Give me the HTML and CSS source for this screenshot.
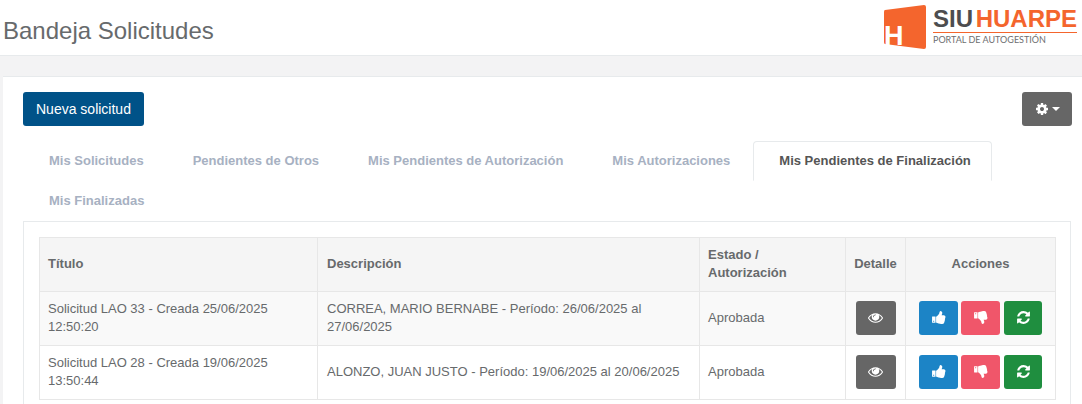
FILE: index.html
```html
<!DOCTYPE html>
<html lang="es">
<head>
    <meta charset="UTF-8">
    <title>Bandeja Solicitudes</title>
    <link rel="stylesheet" href="styles.css">
</head>
<body>
    <svg class="icon-defs" xmlns="http://www.w3.org/2000/svg">
        <defs>
            <path id="i-cog" d="M1152 896q0-106-75-181t-181-75-181 75-75 181 75 181 181 75 181-75 75-181zm512-109v222q0 12-8 23t-20 13l-185 28q-19 54-39 91 35 50 107 138 10 12 10 25t-9 23q-27 37-99 108t-94 71q-12 0-26-9l-138-108q-44 23-91 38-16 136-29 186-7 28-36 28h-222q-14 0-24.500-8.500t-11.500-21.500l-28-184q-49-16-90-37l-141 107q-10 9-25 9-14 0-25-11-126-114-165-168-7-10-7-23 0-12 8-23 15-21 51-66.500t54-70.500q-27-50-41-99l-183-27q-13-2-21-12.500t-8-23.500v-222q0-12 8-23t19-13l186-28q14-46 39-92-40-57-107-138-10-12-10-24 0-10 9-23 26-36 98.500-107.500t94.500-71.500q13 0 26 10l138 107q44-23 91-38 16-136 29-186 7-28 36-28h222q14 0 24.500 8.500t11.500 21.500l28 184q49 16 90 37l142-107q9-9 24-9 13 0 25 10 129 119 165 170 7 8 7 22 0 12-8 23-15 21-51 66.500t-54 70.500q26 50 41 98l183 28q13 2 21 12.500t8 23.500z"/>
            <path id="i-eye" d="M1664 960q-152-236-381-353 61 104 61 225 0 185-131.500 316.500t-316.500 131.500-316.500-131.500-131.500-316.500q0-121 61-225-229 117-381 353 133 205 333.500 326.500t434.500 121.500 434.500-121.500 333.500-326.500zm-720-384q0-20-14-34t-34-14q-125 0-214.500 89.500t-89.500 214.500q0 20 14 34t34 14 34-14 14-34q0-86 61-147t147-61q20 0 34-14t14-34zm848 384q0 34-20 69-140 230-376.500 368.500t-499.500 138.500-499.500-139-376.500-368q-20-35-20-69t20-69q140-229 376.500-368t499.500-139 499.500 139 376.500 368q20 35 20 69z"/>
            <path id="i-up" d="M384 1344q0-26-19-45t-45-19-45 19-19 45 19 45 45 19 45-19 19-45zm160-512v640q0 26-19 45t-45 19h-288q-26 0-45-19t-19-45v-640q0-26 19-45t45-19h288q26 0 45 19t19 45zm1184 0q0 86-55 149 15 44 15 76 3 76-43 137 17 56 0 117-15 57-54 94 9 112-49 181-64 76-197 78h-129q-66 0-144-15.500t-121.500-29-120.500-39.500q-123-43-158-44-26-1-45-19.500t-19-44.500v-641q0-25 18-43.500t43-20.500q24-2 76-59t101-121q68-87 101-120 18-18 31-48t17.500-48.500 13.500-60.500q7-39 12.500-61t19.500-52 34-50q19-19 45-19 46 0 82.500 10.500t60 26 40 40.500 24 45 12 50 5 45 .5 39q0 38-9.500 76t-19 60-27.500 56q-3 6-10 18t-11 22-8 24h277q78 0 135 57t57 135z"/>
            <path id="i-refresh" d="M1639 1056q0 5-1 7-64 268-268 434.500t-478 166.500q-146 0-282.500-55t-243.500-157l-129 129q-19 19-45 19t-45-19-19-45v-448q0-26 19-45t45-19h448q26 0 45 19t19 45-19 45l-137 137q71 66 161 102t187 36q134 0 250-65t186-179q11-17 53-117 8-23 30-23h192q13 0 22.500 9.500t9.500 22.500zm25-800v448q0 26-19 45t-45 19h-448q-26 0-45-19t-19-45 19-45l138-138q-148-137-349-137-134 0-250 65t-186 179q-11 17-53 117-8 23-30 23h-199q-13 0-22.500-9.500t-9.500-22.500v-7q65-268 270-434.500t480-166.500q146 0 284 55.500t245 156.500l130-129q19-19 45-19t45 19 19 45z"/>
        </defs>
    </svg>

    <header class="top-bar">
        <h1 class="page-title">Bandeja Solicitudes</h1>
        <div class="logo">
            <svg class="logo-mark" viewBox="0 0 42 48" xmlns="http://www.w3.org/2000/svg">
                <path d="M1 5 L40 0 Q42 0 42 2 L42 42 Q42 44 40 44 L1 39 Q0 39 0 37 L0 7 Q0 5 1 5 Z" fill="#f4652d"/>
                <text x="0" y="40" class="logo-h">H</text>
            </svg>
            <div class="logo-text">
                <div class="logo-name"><span class="logo-siu">SIU</span><span class="logo-huarpe">HUARPE</span></div>
                <div class="logo-sub">PORTAL DE AUTOGESTIÓN</div>
            </div>
        </div>
    </header>

    <main class="panel">
        <div class="toolbar">
            <button class="btn btn-primary">Nueva solicitud</button>
            <button class="btn btn-gear">
                <svg class="icon icon-gear" viewBox="0 0 1792 1792"><use href="#i-cog"/></svg>
                <span class="caret"></span>
            </button>
        </div>

        <ul class="tabs">
            <li class="tab">Mis Solicitudes</li>
            <li class="tab">Pendientes de Otros</li>
            <li class="tab">Mis Pendientes de Autorización</li>
            <li class="tab">Mis Autorizaciones</li>
            <li class="tab active">Mis Pendientes de Finalización</li>
            <li class="tab">Mis Finalizadas</li>
        </ul>

        <section class="tab-content">
            <table class="grid">
                <thead>
                    <tr>
                        <th class="col-title">Título</th>
                        <th class="col-desc">Descripción</th>
                        <th class="col-state">Estado / Autorización</th>
                        <th class="col-detail center">Detalle</th>
                        <th class="center">Acciones</th>
                    </tr>
                </thead>
                <tbody>
                    <tr>
                        <td>Solicitud LAO 33 - Creada 25/06/2025 12:50:20</td>
                        <td class="desc">CORREA, MARIO BERNABE - Período: 26/06/2025 al 27/06/2025</td>
                        <td>Aprobada</td>
                        <td class="center mid">
                            <button class="btn btn-icon btn-gray"><svg class="icon" viewBox="0 0 1792 1792"><use href="#i-eye"/></svg></button>
                        </td>
                        <td class="center mid">
                            <div class="actions">
                                <button class="btn btn-icon btn-blue"><svg class="icon" viewBox="0 0 1792 1792"><use href="#i-up"/></svg></button>
                                <button class="btn btn-icon btn-red"><svg class="icon flip" viewBox="0 0 1792 1792"><use href="#i-up"/></svg></button>
                                <button class="btn btn-icon btn-green"><svg class="icon" viewBox="0 0 1792 1792"><use href="#i-refresh"/></svg></button>
                            </div>
                        </td>
                    </tr>
                    <tr>
                        <td>Solicitud LAO 28 - Creada 19/06/2025 13:50:44</td>
                        <td class="desc">ALONZO, JUAN JUSTO - Período: 19/06/2025 al 20/06/2025</td>
                        <td>Aprobada</td>
                        <td class="center mid">
                            <button class="btn btn-icon btn-gray"><svg class="icon" viewBox="0 0 1792 1792"><use href="#i-eye"/></svg></button>
                        </td>
                        <td class="center mid">
                            <div class="actions">
                                <button class="btn btn-icon btn-blue"><svg class="icon" viewBox="0 0 1792 1792"><use href="#i-up"/></svg></button>
                                <button class="btn btn-icon btn-red"><svg class="icon flip" viewBox="0 0 1792 1792"><use href="#i-up"/></svg></button>
                                <button class="btn btn-icon btn-green"><svg class="icon" viewBox="0 0 1792 1792"><use href="#i-refresh"/></svg></button>
                            </div>
                        </td>
                    </tr>
                </tbody>
            </table>
        </section>
    </main>
</body>
</html>
```

FILE: styles.css
```css
html, body {
    height: 100%;
    overflow: hidden;
}
body {
    margin: 0;
    background: #f3f3f4;
    color: #676a6c;
    font-family: "Liberation Sans", Arial, sans-serif;
    font-size: 13px;
    line-height: 1.42857;
}
.icon-defs {
    display: none;
}

/* top bar */
.top-bar {
    display: flex;
    justify-content: space-between;
    height: 55px;
    background: #fff;
    border-bottom: 1px solid #e7eaec;
    padding-left: 3px;
    padding-right: 5px;
}
.page-title {
    margin: 0;
    padding-top: 16px;
    font-size: 24px;
    font-weight: 400;
    line-height: 30px;
    color: #676a6c;
}
.logo {
    display: flex;
    gap: 7px;
    padding-top: 5px;
}
.logo-mark {
    width: 42px;
    height: 48px;
}
.logo-h {
    font-family: "Liberation Sans", Arial, sans-serif;
    font-size: 27px;
    font-weight: 700;
    fill: #fff;
}
.logo-text {
    width: 144px;
    padding-top: 1px;
}
.logo-name {
    display: flex;
    justify-content: space-between;
    height: 26px;
    border-bottom: 1.5px solid #f4652d;
    font-size: 24px;
    font-weight: 700;
    line-height: 26px;
}
.logo-siu {
    color: #4d4d4f;
}
.logo-huarpe {
    color: #f4652d;
}
.logo-sub {
    font-family: Lato, "Liberation Sans", sans-serif;
    font-size: 9px;
    line-height: 13px;
    color: #6d6e70;
}

/* main panel */
.panel {
    margin: 20px 0 0 3px;
    padding: 15px 10px 0 20px;
    height: 320px;
    background: #fff;
    border-top: 1px solid #e7eaec;
}
.toolbar {
    display: flex;
    justify-content: space-between;
    margin-bottom: 15px;
}
.btn {
    border: 1px solid transparent;
    border-radius: 3px;
    color: #fff;
    font-family: inherit;
    font-size: 14px;
    line-height: 20px;
    padding: 6px 12px;
    cursor: pointer;
}
.btn-primary {
    background: #005288;
}
.btn-gear {
    display: flex;
    align-items: center;
    justify-content: center;
    gap: 3px;
    width: 50px;
    padding: 0;
    background: #666;
}
.caret {
    border-top: 4px solid #fff;
    border-left: 4px solid transparent;
    border-right: 4px solid transparent;
}
.icon {
    display: block;
    width: 15px;
    height: 15px;
    fill: #fff;
}
.icon-gear {
    width: 14px;
    height: 14px;
}
.flip {
    transform: scaleY(-1);
}

/* tabs */
.tabs {
    display: flex;
    flex-wrap: wrap;
    gap: 0 2px;
    margin: 0;
    padding: 0;
    list-style: none;
}
.tab {
    padding: 10px 20px 10px 25px;
    border: 1px solid transparent;
    font-weight: 700;
    line-height: 18px;
    color: #a7b1c2;
}
.tab.active {
    background: #fff;
    border-color: #e7eaec;
    border-bottom-color: #fff;
    border-radius: 4px 4px 0 0;
    color: #555;
}

/* table */
.tab-content {
    width: 1048px;
    box-sizing: border-box;
    border: 1px solid #e7eaec;
    border-bottom: 0;
    padding: 15px;
    height: 200px;
}
.grid {
    width: 1017px;
    table-layout: fixed;
    border-collapse: collapse;
}
.grid th, .grid td {
    border: 1px solid #e7e7e7;
    padding: 8px 8px 9px;
    line-height: 18px;
    text-align: left;
    vertical-align: middle;
}
.grid td.mid {
    padding-top: 7px;
    padding-bottom: 9px;
}
.grid .desc, .grid .col-desc {
    padding-left: 9px;
}
.grid thead tr {
    background: #f5f5f5;
}
.grid tbody tr:nth-child(odd) {
    background: #f9f9f9;
}
.grid .center {
    text-align: center;
}
.col-title {
    width: 278px;
    box-sizing: border-box;
}
.col-desc {
    width: 382px;
    box-sizing: border-box;
}
.col-state {
    width: 146px;
    box-sizing: border-box;
}
.col-detail {
    width: 60px;
    box-sizing: border-box;
}
.actions {
    display: flex;
    justify-content: center;
    gap: 3.7px;
    padding-left: 0.3px;
}
.btn-icon {
    display: inline-flex;
    align-items: center;
    justify-content: center;
    height: 34px;
    width: 38.7px;
    padding: 0;
    vertical-align: middle;
}
.btn-gray {
    width: 40px;
    background: #666;
}
.btn-blue {
    background: #1c84c6;
}
.btn-red {
    background: #f0566a;
}
.btn-green {
    background: #1f8e3f;
}
```
